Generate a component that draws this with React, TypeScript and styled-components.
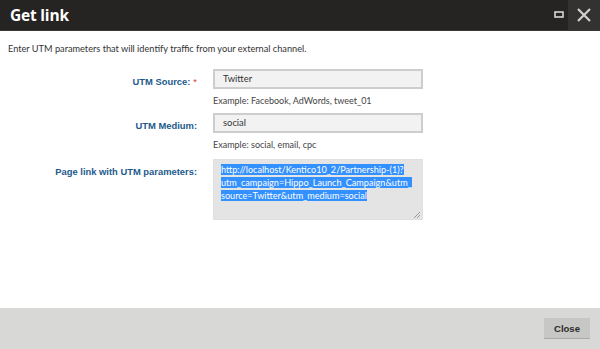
import styled, { createGlobalStyle } from "styled-components";

const GlobalStyle = createGlobalStyle`
  * { box-sizing: border-box; }
  html, body { margin: 0; padding: 0; background: #fff; }
  body { width: 600px; height: 349px; overflow: hidden; }
`;

type FieldProps = {
  label: string;
  required?: boolean;
  value: string;
  hint?: string;
};

const Field = ({ label, required, value, hint }: FieldProps) => (
  <Row>
    <Label>
      {label}
      {required && <Star>*</Star>}
    </Label>
    <Control>
      <Input>{value}</Input>
      {hint && <Hint>{hint}</Hint>}
    </Control>
  </Row>
);

const App = () => {
  return (
    <>
      <GlobalStyle />
      <Dialog>
        <Header>
          <Title>Get link</Title>
          <HeaderButtons>
            <MaxButton>
              <svg width="10" height="7" viewBox="0 0 10 7">
                <rect x="1" y="1" width="8" height="5" fill="none" stroke="#d6d6d6" strokeWidth="1.6" />
              </svg>
            </MaxButton>
            <CloseX>
              <svg width="16" height="16" viewBox="0 0 16 16">
                <path d="M2 2 L14 14 M14 2 L2 14" stroke="#d2d2d2" strokeWidth="2.2" />
              </svg>
            </CloseX>
          </HeaderButtons>
        </Header>
        <Body>
          <Intro>Enter UTM parameters that will identify traffic from your external channel.</Intro>
          <Form>
            <Field label="UTM Source:" required value="Twitter" hint="Example: Facebook, AdWords, tweet_01" />
            <Field label="UTM Medium:" value="social" hint="Example: social, email, cpc" />
            <Row $spaced>
              <Label>Page link with UTM parameters:</Label>
              <Control>
                <TextArea>
                  <Selected>
                    http://localhost/Kentico10_2/Partnership-(1)?
                    <br />
                    utm_campaign=Hippo_Launch_Campaign&amp;utm_
                    <br />
                    source=Twitter&amp;utm_medium=social
                  </Selected>
                  <Grip>
                    <svg width="6" height="6" viewBox="0 0 6 6">
                      <path d="M6 0 L0 6 M6 3 L3 6" stroke="#999" strokeWidth="1" />
                    </svg>
                  </Grip>
                </TextArea>
              </Control>
            </Row>
          </Form>
        </Body>
        <Footer>
          <CloseButton>Close</CloseButton>
        </Footer>
      </Dialog>
    </>
  );
};

export default App;

const Dialog = styled.div`
  width: 600px;
  height: 349px;
  display: flex;
  flex-direction: column;
  background: #fff;
  font-family: Lato, "Noto Sans", sans-serif;
`;

const Header = styled.div`
  height: 31px;
  background: #262422;
  border-bottom: 1px solid #3a3836;
  display: flex;
  align-items: center;
  justify-content: space-between;
  padding-left: 10px;
`;

const Title = styled.h1`
  margin: 0;
  color: #fff;
  font-family: "Open Sans", "Noto Sans", sans-serif;
  font-size: 15.5px;
  font-weight: 700;
  letter-spacing: -0.2px;
`;

const HeaderButtons = styled.div`
  display: flex;
  align-items: stretch;
  height: 100%;
`;

const MaxButton = styled.div`
  width: 18px;
  display: flex;
  align-items: center;
  justify-content: center;
  padding-bottom: 2px;
`;

const CloseX = styled.div`
  width: 32px;
  background: #343230;
  display: flex;
  align-items: center;
  justify-content: center;
`;

const Body = styled.div`
  flex: 1;
  padding: 11px 8px 0;
`;

const Intro = styled.p`
  margin: 0;
  font-size: 9.2px;
  color: #333;
  line-height: 14px;
`;

const Form = styled.div`
  margin-top: 13px;
  display: flex;
  flex-direction: column;
  gap: 5px;
`;

const Row = styled.div<{ $spaced?: boolean }>`
  display: flex;
  align-items: flex-start;
  margin-top: ${(p) => (p.$spaced ? "2px" : "0")};
`;

const Label = styled.div`
  width: 189px;
  padding-top: 6px;
  text-align: right;
  font-family: "Liberation Sans", Arial, sans-serif;
  font-size: 9.4px;
  font-weight: 700;
  color: #1c5a8c;
  line-height: 13px;
`;

const Star = styled.span`
  margin-left: 3px;
  color: #d33;
  font-weight: 400;
`;

const Control = styled.div`
  margin-left: 16px;
  display: flex;
  flex-direction: column;
`;

const Input = styled.div`
  width: 210px;
  height: 20px;
  padding: 0 8px;
  background: #f2f2f2;
  border: 2px solid #cdcdcd;
  font-size: 9.4px;
  color: #333;
  line-height: 16px;
`;

const Hint = styled.div`
  margin-top: 5px;
  font-size: 9px;
  color: #444;
  line-height: 14px;
`;

const TextArea = styled.div`
  position: relative;
  width: 210px;
  height: 61px;
  padding: 3px 7px;
  background: #e4e4e4;
  border: 1px solid #e0e0e0;
  font-size: 9.1px;
  line-height: 13px;
  color: #fff;
  white-space: nowrap;
`;

const Selected = styled.span`
  background: #3390ff;
  color: #fff;
`;

const Grip = styled.div`
  position: absolute;
  right: 2px;
  bottom: 1px;
  display: flex;
`;

const Footer = styled.div`
  height: 41px;
  background: #d8d8d6;
  display: flex;
  align-items: center;
  justify-content: flex-end;
  padding-right: 10px;
`;

const CloseButton = styled.button`
  width: 46px;
  height: 21px;
  padding: 0;
  background: #c7c7c5;
  border: none;
  border-bottom: 1px solid #a9a9a7;
  font-family: "Liberation Sans", Arial, sans-serif;
  font-size: 9.5px;
  font-weight: 700;
  color: #2a2a2a;
`;
